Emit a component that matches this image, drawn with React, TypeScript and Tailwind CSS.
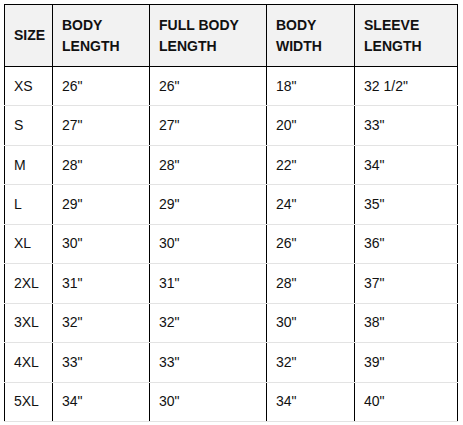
import React from "react";

const cols = ["w-[48px]", "w-[97px]", "w-[117px]", "w-[88px]", "w-[104px]"];

const header: string[][] = [
  ["SIZE"],
  ["BODY", "LENGTH"],
  ["FULL BODY", "LENGTH"],
  ["BODY", "WIDTH"],
  ["SLEEVE", "LENGTH"],
];

const rows: string[][] = [
  ["XS", '26"', '26"', '18"', '32 1/2"'],
  ["S", '27"', '27"', '20"', '33"'],
  ["M", '28"', '28"', '22"', '34"'],
  ["L", '29"', '29"', '24"', '35"'],
  ["XL", '30"', '30"', '26"', '36"'],
  ["2XL", '31"', '31"', '28"', '37"'],
  ["3XL", '32"', '32"', '30"', '38"'],
  ["4XL", '33"', '33"', '32"', '39"'],
  ["5XL", '34"', '30"', '34"', '40"'],
];

export default function App() {
  return (
    <div className="w-[463px] h-[425px] bg-white pt-[4px] pl-[4px] text-[#111111] text-[14px]" style={{ fontFamily: '"Liberation Sans", Arial, sans-serif' }}>
      <div className="w-[454px] border-t border-black">
        <div className="flex h-[62px] bg-[#f2f2f2] border-b border-black">
          {header.map((h, i) => (
            <div
              key={i}
              className={`${cols[i]} shrink-0 border-l border-black ${i === 4 ? "border-r" : ""} flex flex-col justify-center pl-[9px] font-bold leading-[21px]`}
            >
              {h.map((t, j) => (
                <span key={j} className="whitespace-nowrap">{t}</span>
              ))}
            </div>
          ))}
        </div>
        {rows.map((r, ri) => (
          <div key={ri} className="flex h-[39.44px] border-b border-[#e3e3e3]">
            {r.map((c, ci) => (
              <div
                key={ci}
                className={`${cols[ci]} shrink-0 border-l border-black ${ci === 4 ? "border-r" : ""} flex items-center pl-[9px]`}
              >
                {c}
              </div>
            ))}
          </div>
        ))}
      </div>
    </div>
  );
}
